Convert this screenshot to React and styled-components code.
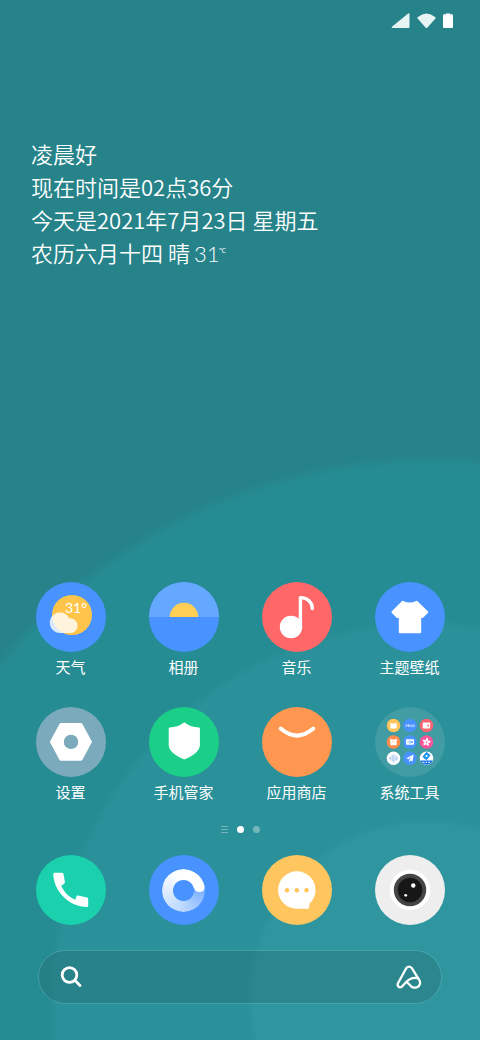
import React from 'react';
import styled, { createGlobalStyle } from 'styled-components';

const GlobalStyle = createGlobalStyle`
  *, *::before, *::after { box-sizing: border-box; }
  body {
    margin: 0;
    font-family: "Noto Sans CJK SC", "Noto Sans", sans-serif;
    color: #fff;
  }
  button { font: inherit; color: inherit; background: none; border: 0; padding: 0; cursor: pointer; }
`;

const Screen = styled.main`
  min-height: 100vh;
  display: flex;
  flex-direction: column;
  background:
    radial-gradient(circle at 89% 96%, #2f96a0 174px, transparent 180px),
    radial-gradient(circle at 89% 96%, #2a9099 371px, transparent 379px),
    radial-gradient(circle at 90% 98%, #268c93 553px, transparent 565px),
    #26838a;
`;

const StatusBar = styled.header`
  display: flex;
  justify-content: flex-end;
  align-items: center;
  gap: 7px;
  height: 42px;
  padding: 0 27px;
`;

const Greeting = styled.section`
  margin-top: 95px;
  padding: 0 31px;
  font-size: 22px;
  font-weight: 350;
  line-height: 33px;

  p { margin: 0; white-space: pre-wrap; }
`;

const Temperature = styled.span`
  font-family: Lato, sans-serif;
  font-weight: 300;
  margin-left: 4px;
`;

const Degree = styled.sup`
  font-size: 7px;
  line-height: 0;
  vertical-align: 9px;
`;

const AppGrid = styled.section`
  display: grid;
  grid-template-columns: repeat(4, 1fr);
  row-gap: 29px;
  padding: 0 14px;
  margin-top: auto;
`;

const AppButton = styled.button`
  display: flex;
  flex-direction: column;
  align-items: center;
  gap: 3px;
`;

const AppLabel = styled.span`
  font-size: 15px;
  line-height: 23px;
  white-space: nowrap;
`;

const Disc = styled.span`
  display: grid;
  place-items: center;
  width: 70px;
  height: 70px;
  border-radius: 50%;
  overflow: hidden;
  background: ${(p) => p.$color};

  svg { display: block; }
`;

const Pager = styled.nav`
  display: flex;
  justify-content: center;
  align-items: center;
  gap: 9px;
  height: 8px;
  margin-top: 22px;
`;

const PageDot = styled.button`
  width: 7px;
  height: 7px;
  border-radius: 50%;
  && { background: ${(p) => (p.$active ? '#fff' : 'rgba(255, 255, 255, 0.35)')}; }
`;

const FeedButton = styled.button`
  display: flex;
  flex-direction: column;
  justify-content: space-between;
  width: 7px;
  height: 7px;

  i { display: block; height: 1px; background: rgba(255, 255, 255, 0.35); }
`;

const Dock = styled.nav`
  display: grid;
  grid-template-columns: repeat(4, 1fr);
  padding: 0 14px;
  margin-top: 22px;
`;

const SearchBar = styled.form`
  display: flex;
  align-items: center;
  height: 54px;
  margin: 25px 38px 36px;
  padding: 0 19px 0 21px;
  border: 1px solid rgba(255, 255, 255, 0.12);
  border-radius: 27px;
  background: rgba(38, 110, 114, 0.4);
  background-clip: padding-box;

  svg { display: block; }
`;

const SearchInput = styled.input`
  flex: 1;
  min-width: 0;
  height: 100%;
  border: 0;
  outline: 0;
  background: none;
  color: inherit;
  font: inherit;
`;

const Ring = styled.span`
  position: relative;
  width: 43px;
  height: 43px;
  border-radius: 50%;
  background: conic-gradient(from 78deg, rgba(255, 255, 255, 0.25), rgba(255, 255, 255, 0.62) 27%, rgba(255, 255, 255, 0.8) 50%, #fff 72%);
  mask: radial-gradient(circle, transparent 10px, #000 11px);

  &::after {
    content: "";
    position: absolute;
    right: 0;
    top: 12px;
    width: 11px;
    height: 11px;
    border-radius: 50%;
    background: #fff;
  }
`;

const Art = ({ children }) => (
  <svg width="70" height="70" viewBox="0 0 70 70" aria-hidden="true">{children}</svg>
);

const WeatherArt = () => (
  <Art>
    <circle cx="36" cy="33" r="20" fill="#ffc54a" />
    <text x="29" y="30.5" fontSize="14" fontFamily="Lato, sans-serif" fill="#fff">31°</text>
    <path d="M24 51a10.3 10.3 0 1 1 9.300-14.800 6.800 6.800 0 1 1 1.700 14.800Z" fill="#fff" fillOpacity=".8" />
  </Art>
);

const AlbumArt = () => (
  <Art>
    <rect width="70" height="35" fill="#64a8ff" />
    <path d="M20.700 35a14.300 14.300 0 0 1 28.600 0Z" fill="#ffcf55" />
  </Art>
);

const MusicArt = () => (
  <Art>
    <circle cx="29" cy="45" r="11.200" fill="#fff" />
    <path d="M38.400 45V15.600C45.500 15.400 50.300 20.500 50.300 26.500" fill="none" stroke="#fff" strokeWidth="3.400" strokeLinecap="round" strokeLinejoin="round" />
  </Art>
);

const ShirtArt = () => (
  <Art>
    <path d="M27.700 20Q34.700 23.500 41.700 20L52 30.200 47.500 34.700 45 34.200V50H25V34.200L22.200 34.700 17.700 30.200Z" fill="#fff" stroke="#fff" strokeWidth="2.400" strokeLinejoin="round" />
  </Art>
);

const SettingsArt = () => (
  <Art>
    <path d="M25.200 18H44.700L53.800 34.900 44.700 51.800H25.200L16 34.900Z" fill="#fff" stroke="#fff" strokeWidth="4" strokeLinejoin="round" />
    <circle cx="35" cy="34.900" r="7.200" fill="#7aaabb" />
  </Art>
);

const ShieldArt = () => (
  <Art>
    <path d="M35.300 16.500C39.500 19.700 44.300 21.300 49.800 21.500V37.500C49.800 44 43.800 47.800 35.300 51.300 26.800 47.800 20.800 44 20.800 37.500V21.500C26.300 21.300 31.100 19.700 35.300 16.500Z" fill="#fff" stroke="#fff" strokeWidth="2.200" strokeLinejoin="round" />
  </Art>
);

const StoreArt = () => (
  <Art>
    <path d="M18.700 21.600Q35 35.600 51.300 21.600" fill="none" stroke="#fff" strokeWidth="4" strokeLinecap="round" />
  </Art>
);

const FolderArt = () => (
  <Art>
    <circle cx="18.500" cy="18.500" r="6.800" fill="#ffc55b" />
    <path d="M15.300 16.300h2.500l.7.600.7-.6h2.500v4.400q0 .8-.8.800h-4.800q-.8 0-.8-.8Z" fill="#fff" />
    <circle cx="35" cy="18.500" r="6.800" fill="#4893ff" />
    <path d="M31.300 20v-2.500l1.100 1.400 1.100-1.400V20M34.800 17.500V20M36.200 17.500v2q.9.900 1.800 0v-2M39.200 17.500V20" fill="none" stroke="#e8f1ff" strokeWidth=".7" />
    <circle cx="51.500" cy="18.500" r="6.800" fill="#fb6570" />
    <rect x="47.700" y="15.600" width="7.500" height="6" rx="1" fill="#fff" />
    <circle cx="53.200" cy="18.600" r="1" fill="#fb6570" />

    <circle cx="18.500" cy="35" r="6.800" fill="#ff8b4a" />
    <path d="M14.800 31.600l2.200.9h3l2.200-.9-.5 2.200v3.700q0 .8-.8.800h-4.800q-.8 0-.8-.8v-3.700Z" fill="#fff" />
    <path d="M17 34.800h.8M19.300 34.800h.8" stroke="#ff8b4a" strokeWidth=".8" />
    <circle cx="35" cy="35" r="6.800" fill="#4893ff" />
    <rect x="31" y="32.300" width="8" height="5.500" rx=".8" fill="#fff" />
    <path d="M35 33v4" stroke="#4893ff" strokeWidth=".7" />
    <circle cx="37" cy="35" r="1" fill="#4893ff" />
    <path d="M32.300 35h1.600" stroke="#8bbaff" strokeWidth="1.200" />
    <circle cx="51.500" cy="35" r="6.800" fill="#fb559c" />
    <g fill="#fff">
      {[10, 82, 154, 226, 298].map((a) => (
        <ellipse key={a} cx="51.500" cy="32.800" rx="1.200" ry="1.900" transform={`rotate(${a} 51.5 35)`} />
      ))}
    </g>
    <circle cx="51.500" cy="35" r=".7" fill="#fb559c" />

    <circle cx="18.500" cy="51.300" r="6.800" fill="#fff" />
    <path d="M14.500 50.300v2M15.900 49.300v4M17.300 48.300v6M18.700 47v8.600M20.100 48.300v6M21.500 49.300v4M22.700 50.300v2" stroke="#9fc3ee" strokeWidth=".8" />
    <circle cx="35" cy="51.300" r="6.800" fill="#4893ff" />
    <path d="M38.700 47.600l-7.500 3.600 2.300 1.100 3-2.500-2.200 3v2.400l1.500-1.600 1.600.8Z" fill="#fff" />
    <circle cx="51.500" cy="51.300" r="6.800" fill="#fff" />
    <path d="M45.200 53.500h12.600a6.800 6.800 0 0 1-12.600 0Z" fill="#1671e8" />
    <path d="M51.500 45.300l3.500 3-3.500 4.500-3.500-3Z" fill="#129be9" stroke="#1671e8" strokeWidth=".8" />
    <circle cx="51.600" cy="49" r="1.100" fill="#fff" />
    <path d="M47.500 55.300h2M50.500 55.300h1.500M53 55.300h2" stroke="#fff" strokeWidth="1" />
  </Art>
);

const PhoneArt = () => (
  <Art>
    <path d="M18.500 17.800H26Q27.200 17.800 27.500 19L28.900 27Q29 28.300 28 28.900L25.200 30.600C28 37.200 32.500 42 39.300 44.700L40.300 41.800Q40.800 40.500 42 40.600L51 42.400Q52.200 42.700 52.200 43.800V50.700Q52.200 52 50.900 52C33 51.800 17.500 36 17.300 19Q17.300 17.800 18.500 17.800Z" fill="#fff" />
  </Art>
);

const MessageArt = () => (
  <Art>
    <path d="M34.800 16.300a18.700 18.700 0 0 1 18.700 18.700c0 5.500-2.400 10.200-6 13.800L47 52.700q0 1-1 1H34.800a18.700 18.700 0 0 1 0-37.400Z" fill="#fff" />
    <g fill="#ffc55b">
      <circle cx="25" cy="35.300" r="2.200" />
      <circle cx="34.800" cy="35.300" r="2.200" />
      <circle cx="44.500" cy="35.300" r="2.200" />
    </g>
  </Art>
);

const CameraArt = () => (
  <Art>
    <circle cx="35" cy="35" r="20.300" fill="#fff" />
    <circle cx="35" cy="35" r="16.200" fill="#464646" />
    <circle cx="35" cy="35" r="12.300" fill="#171717" />
    <circle cx="38.300" cy="30.500" r="2.200" fill="#fff" />
    <circle cx="30.700" cy="40.300" r="1.400" fill="#fff" />
  </Art>
);

const apps = [
  { name: '天气', color: '#4893ff', Icon: WeatherArt },
  { name: '相册', color: '#4893ff', Icon: AlbumArt },
  { name: '音乐', color: '#ff6769', Icon: MusicArt },
  { name: '主题壁纸', color: '#4893ff', Icon: ShirtArt },
  { name: '设置', color: '#7aaabb', Icon: SettingsArt },
  { name: '手机管家', color: '#1bcf89', Icon: ShieldArt },
  { name: '应用商店', color: '#ff9750', Icon: StoreArt },
  { name: '系统工具', color: 'rgba(255, 255, 255, 0.11)', Icon: FolderArt },
];

const dockApps = [
  { name: '电话', color: '#1ad0ad', Icon: PhoneArt },
  { name: '浏览器', color: '#4893ff', Icon: Ring },
  { name: '信息', color: '#ffc55f', Icon: MessageArt },
  { name: '相机', color: '#eeeeee', Icon: CameraArt },
];

export default function App() {
  return (
    <Screen>
      <GlobalStyle />
      <StatusBar>
        <svg width="19" height="16" viewBox="0 0 19 16" fill="#e8f3f4" aria-hidden="true">
          <path d="M17.500.6V15H1.200Q.3 14.600 1 13.800L16.500.9Q18.300-.3 18.500 1V14q0 1-1 1Z" />
        </svg>
        <svg width="19" height="16" viewBox="0 0 19 16" fill="#e8f3f4" aria-hidden="true">
          <path d="M.6 4.200Q9.500-3.200 18.400 4.200q.6.700 0 1.400L10.300 14.700q-.8.700-1.600 0L.6 5.600q-.6-.7 0-1.400Z" />
        </svg>
        <svg width="10" height="16" viewBox="0 0 10 16" fill="#fff" aria-hidden="true">
          <path d="M3 .5h4v.7h1.800q1.200 0 1.200 1.200v11.400q0 1.200-1.200 1.200H1.200Q0 15 0 13.800V2.400Q0 1.200 1.200 1.200H3Z" />
        </svg>
      </StatusBar>

      <Greeting>
        <p>凌晨好</p>
        <p>现在时间是02点36分</p>
        <p>今天是2021年7月23日 星期五</p>
        <p>农历六月十四 晴<Temperature>31<Degree>℃</Degree></Temperature></p>
      </Greeting>

      <AppGrid>
        {apps.map(({ name, color, Icon }) => (
          <AppButton key={name} type="button">
            <Disc $color={color}><Icon /></Disc>
            <AppLabel>{name}</AppLabel>
          </AppButton>
        ))}
      </AppGrid>

      <Pager>
        <FeedButton type="button" aria-label="负一屏"><i /><i /><i /></FeedButton>
        <PageDot type="button" $active aria-label="第1页" />
        <PageDot type="button" aria-label="第2页" />
      </Pager>

      <Dock>
        {dockApps.map(({ name, color, Icon }) => (
          <AppButton key={name} type="button" aria-label={name}>
            <Disc $color={color}><Icon /></Disc>
          </AppButton>
        ))}
      </Dock>

      <SearchBar role="search" onSubmit={(e) => e.preventDefault()}>
        <button type="submit" aria-label="搜索">
          <svg width="22" height="22" viewBox="0 0 22 22" fill="none" stroke="#fff" strokeWidth="2.800" strokeLinecap="round">
            <circle cx="9.500" cy="9" r="7.300" />
            <path d="M15 14.500L20 19.500" />
          </svg>
        </button>
        <SearchInput type="text" aria-label="搜索内容" />
        <button type="button" aria-label="语音助手">
          <svg width="26" height="25" viewBox="0 0 26 25" fill="none" stroke="#fff" strokeWidth="2.300" strokeLinecap="round" strokeLinejoin="round">
            <path d="M11.300 17.500L14.600 20.800C16.500 22.600 19 23 21 22.200 24.300 20.900 24.800 17.300 23.200 14.800L16 3.300Q13 .1 10.200 3.300L2 18.300C.8 21 3.300 23.300 5.800 21.800L9.200 18C12.200 14.300 16 12.200 21.200 13" />
          </svg>
        </button>
      </SearchBar>
    </Screen>
  );
}
